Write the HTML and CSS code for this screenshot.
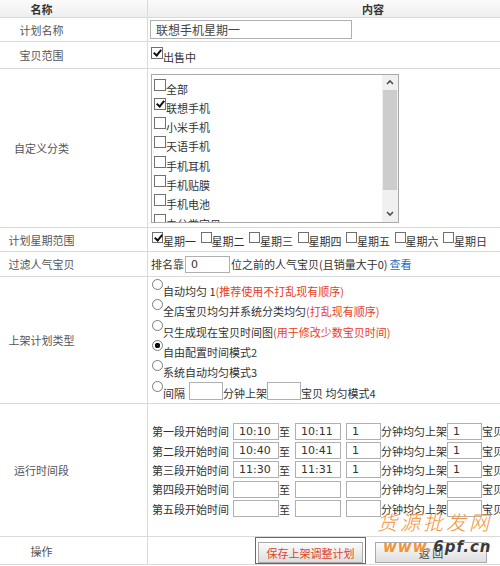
FILE: index.html
```html
<!DOCTYPE html>
<html>
<head>
    <meta charset="UTF-8">
    <title>上架计划</title>
    <link rel="stylesheet" href="styles.css">
</head>
<body>
<div class="page">
    <table class="plan">
        <colgroup><col class="c-label"><col class="c-body"></colgroup>
        <tr class="row-head">
            <th>名称</th>
            <th>内容</th>
        </tr>
        <tr class="row-name">
            <td class="label">计划名称</td>
            <td class="body"><input type="text" class="txt plan-name" value="联想手机星期一"></td>
        </tr>
        <tr class="row-scope">
            <td class="label">宝贝范围</td>
            <td class="body"><label class="opt"><input type="checkbox" class="cb" checked><span>出售中</span></label></td>
        </tr>
        <tr class="row-cat">
            <td class="label">自定义分类</td>
            <td class="body">
                <div class="listbox">
                    <div class="list-items">
                        <label class="opt"><input type="checkbox" class="cb"><span>全部</span></label>
                        <label class="opt"><input type="checkbox" class="cb" checked><span>联想手机</span></label>
                        <label class="opt"><input type="checkbox" class="cb"><span>小米手机</span></label>
                        <label class="opt"><input type="checkbox" class="cb"><span>天语手机</span></label>
                        <label class="opt"><input type="checkbox" class="cb"><span>手机耳机</span></label>
                        <label class="opt"><input type="checkbox" class="cb"><span>手机贴膜</span></label>
                        <label class="opt"><input type="checkbox" class="cb"><span>手机电池</span></label>
                        <label class="opt"><input type="checkbox" class="cb"><span>未分类宝贝</span></label>
                    </div>
                    <div class="scroll">
                        <div class="arrow">
                            <svg width="8" height="6" viewBox="0 0 8 6"><polyline points="1,5 4,2 7,5" fill="none" stroke="#505050" stroke-width="1.6"/></svg>
                        </div>
                        <div class="thumb"></div>
                        <div class="track"></div>
                        <div class="arrow">
                            <svg width="8" height="6" viewBox="0 0 8 6"><polyline points="1,1 4,4 7,1" fill="none" stroke="#505050" stroke-width="1.6"/></svg>
                        </div>
                    </div>
                </div>
            </td>
        </tr>
        <tr class="row-week">
            <td class="label">计划星期范围</td>
            <td class="body">
                <div class="week">
                    <label class="opt"><input type="checkbox" class="cb" checked><span>星期一</span></label>
                    <label class="opt"><input type="checkbox" class="cb"><span>星期二</span></label>
                    <label class="opt"><input type="checkbox" class="cb"><span>星期三</span></label>
                    <label class="opt"><input type="checkbox" class="cb"><span>星期四</span></label>
                    <label class="opt"><input type="checkbox" class="cb"><span>星期五</span></label>
                    <label class="opt"><input type="checkbox" class="cb"><span>星期六</span></label>
                    <label class="opt"><input type="checkbox" class="cb"><span>星期日</span></label>
                </div>
            </td>
        </tr>
        <tr class="row-filter">
            <td class="label">过滤人气宝贝</td>
            <td class="body">
                <div class="inline">
                    <span>排名靠</span><input type="text" class="txt rank" value="0"><span>位之前的人气宝贝(且销量大于0)</span><a class="link" href="#">查看</a>
                </div>
            </td>
        </tr>
        <tr class="row-type">
            <td class="label">上架计划类型</td>
            <td class="body">
                <div class="types">
                    <label class="opt"><input type="radio" name="mode" class="rd"><span>自动均匀 1<em class="hint">(推荐使用不打乱现有顺序)</em></span></label>
                    <label class="opt"><input type="radio" name="mode" class="rd"><span>全店宝贝均匀并系统分类均匀<em class="hint">(打乱现有顺序)</em></span></label>
                    <label class="opt"><input type="radio" name="mode" class="rd"><span>只生成现在宝贝时间图<em class="hint">(用于修改少数宝贝时间)</em></span></label>
                    <label class="opt"><input type="radio" name="mode" class="rd" checked><span>自由配置时间模式2</span></label>
                    <label class="opt"><input type="radio" name="mode" class="rd"><span>系统自动均匀模式3</span></label>
                    <label class="opt last"><input type="radio" name="mode" class="rd"><span>间隔</span><input type="text" class="txt gap gap-first"><span>分钟上架</span><input type="text" class="txt gap"><span>宝贝 均匀模式4</span></label>
                </div>
            </td>
        </tr>
        <tr class="row-time">
            <td class="label">运行时间段</td>
            <td class="body">
                <div class="slots">
                    <div class="slot">
                        <span class="slot-name">第一段开始时间</span><input class="txt t" value="10:10"><span class="to">至</span><input class="txt t" value="10:11"><input class="txt n" value="1"><span>分钟均匀上架</span><input class="txt n" value="1"><span>宝贝</span>
                    </div>
                    <div class="slot">
                        <span class="slot-name">第二段开始时间</span><input class="txt t" value="10:40"><span class="to">至</span><input class="txt t" value="10:41"><input class="txt n" value="1"><span>分钟均匀上架</span><input class="txt n" value="1"><span>宝贝</span>
                    </div>
                    <div class="slot">
                        <span class="slot-name">第三段开始时间</span><input class="txt t" value="11:30"><span class="to">至</span><input class="txt t" value="11:31"><input class="txt n" value="1"><span>分钟均匀上架</span><input class="txt n" value="1"><span>宝贝</span>
                    </div>
                    <div class="slot">
                        <span class="slot-name">第四段开始时间</span><input class="txt t" value=""><span class="to">至</span><input class="txt t" value=""><input class="txt n" value=""><span>分钟均匀上架</span><input class="txt n" value=""><span>宝贝</span>
                    </div>
                    <div class="slot">
                        <span class="slot-name">第五段开始时间</span><input class="txt t" value=""><span class="to">至</span><input class="txt t" value=""><input class="txt n" value=""><span>分钟均匀上架</span><input class="txt n" value=""><span>宝贝</span>
                    </div>
                </div>
            </td>
        </tr>
        <tr class="row-ops">
            <td class="label">操作</td>
            <td class="body ops">
                <div class="actions">
                    <span class="hl"><button class="btn btn-save">保存上架调整计划</button></span>
                    <button class="btn btn-back">返 回</button>
                </div>
            </td>
        </tr>
    </table>

    <div class="watermark">
        <div class="wm-name">货源批发网</div>
        <div class="wm-url">www.<b>6pf.cn</b></div>
    </div>
</div>
</body>
</html>
```

FILE: styles.css
```css
body {
    margin: 0;
    background: #fff;
    font-family: "Noto Sans CJK SC", sans-serif;
    font-size: 11px;
    color: #333;
}
.page {
    position: relative;
    width: 500px;
    height: 566px;
    overflow: hidden;
}
.plan {
    width: 664px;
    margin-left: -65px;
    border-collapse: collapse;
    table-layout: fixed;
}
.c-label {
    width: 212px;
}
.plan th, .plan td {
    border: 1px solid #dadada;
    padding: 0;
}
.row-head th {
    border-top: none;
    height: 17px;
    background: linear-gradient(#fbfbfb, #eeeeee);
    font-weight: bold;
    font-size: 11px;
    line-height: 14px;
    color: #333;
    text-align: center;
}
.row-name td { height: 23px; }
.row-scope td { height: 26px; }
.row-cat td { height: 158px; }
.row-week td { height: 23px; }
.row-filter td { height: 24px; }
.row-type td { height: 126px; }
.row-time td { height: 132px; }
.row-ops td { height: 25px; }
.label {
    text-align: center;
    vertical-align: middle;
    color: #555;
}
.body {
    vertical-align: middle;
    padding-left: 3px !important;
}
.txt {
    box-sizing: border-box;
    height: 17px;
    margin: 0;
    padding: 0 5px;
    border: 1px solid #b0b0b0;
    background: #fff;
    font-family: "DejaVu Sans", "Noto Sans CJK SC", sans-serif;
    font-size: 11px;
    color: #333;
    outline: none;
}
.plan-name {
    width: 202px;
    height: 19px;
    margin-left: -1px;
    font-family: "Noto Sans CJK SC", sans-serif;
    font-size: 12px;
    color: #444;
}
.opt {
    display: inline-flex;
    align-items: flex-start;
    line-height: 13px;
}
.opt > span {
    padding-top: 4px;
}
.cb {
    appearance: none;
    -webkit-appearance: none;
    position: relative;
    box-sizing: border-box;
    width: 12px;
    height: 12px;
    margin: 0;
    border: 1px solid #707070;
    background: #fff;
}
.cb:checked::after {
    content: "";
    position: absolute;
    left: 3px;
    top: 0;
    width: 3px;
    height: 6px;
    border: solid #111;
    border-width: 0 2px 2px 0;
    transform: rotate(40deg);
}
.rd {
    appearance: none;
    -webkit-appearance: none;
    box-sizing: border-box;
    width: 11px;
    height: 11px;
    margin: 0;
    border: 1px solid #7a7a7a;
    border-radius: 50%;
    background: #fff;
}
.rd:checked {
    background: radial-gradient(circle, #111 2.5px, #fff 3px);
}
.listbox {
    display: flex;
    width: 248px;
    height: 149px;
    box-sizing: border-box;
    border: 1px solid #a8a8a8;
}
.list-items {
    flex: 1;
    overflow: hidden;
    padding: 4px 0 0 2px;
}
.list-items .opt {
    display: flex;
    height: 19.3px;
}
.scroll {
    width: 16px;
    display: flex;
    flex-direction: column;
    background: #f0f0f0;
}
.arrow {
    height: 15px;
    display: flex;
    align-items: center;
    justify-content: center;
}
.thumb {
    height: 100px;
    margin: 0 1px;
    background: #cdcdcd;
}
.track {
    flex: 1;
}
.week {
    display: flex;
    margin-left: 1px;
}
.week .opt {
    margin-right: 4.5px;
}
.week .cb {
    width: 11px;
    height: 11px;
}
.week .opt > span {
    padding-top: 3px;
}
.inline {
    display: flex;
    align-items: center;
}
.rank {
    width: 45px;
    margin: 0 1px 0 1px;
}
.link {
    color: #1b6fc2;
    text-decoration: none;
    margin-left: 2px;
}
.types {
    display: flex;
    flex-direction: column;
    margin-left: 1px;
}
.types .opt {
    display: flex;
    height: 20.3px;
}
.types .opt > span {
    padding-top: 6px;
}
.hint {
    font-style: normal;
    color: #e8401e;
}
.gap {
    width: 34px;
    height: 18px;
    margin-top: 1px;
}
.gap-first {
    margin-left: 4px;
}
.slots {
    display: flex;
    flex-direction: column;
    margin-left: 1px;
}
.slot {
    display: flex;
    align-items: center;
    height: 19.3px;
    white-space: nowrap;
}
.slot-name {
    width: 81px;
}
.slot .t {
    width: 46px;
}
.to {
    width: 16px;
}
.slot .n {
    width: 35px;
}
.slot .to + .t {
    margin-right: 5px;
}
.ops {
    vertical-align: bottom !important;
}
.actions {
    display: flex;
    align-items: flex-end;
    padding-left: 104px;
}
.hl {
    display: inline-block;
    border: 1px solid #d33b3b;
    padding: 4px 2px 0;
}
.btn {
    display: block;
    height: 21px;
    padding: 0;
    border: 1px solid #a9a9a9;
    background: linear-gradient(#fbfbfb, #dedede);
    font-family: "Noto Sans CJK SC", sans-serif;
    font-size: 11px;
}
.btn-save {
    width: 105px;
    color: #e0421f;
}
.btn-back {
    width: 112px;
    margin-left: 9px;
    margin-bottom: 1px;
    color: #444;
}
.watermark {
    position: absolute;
    left: 377px;
    top: 508px;
    width: 123px;
    color: #f39236;
    font-style: italic;
    pointer-events: none;
}
.wm-name {
    font-size: 20px;
    font-weight: 300;
    line-height: 28px;
    letter-spacing: 3px;
}
.wm-url {
    font-family: "DejaVu Sans", sans-serif;
    font-size: 15px;
    font-weight: bold;
    line-height: 22px;
    margin-left: 6px;
    letter-spacing: 1px;
}
.wm-url b {
    color: #3a3a3a;
    text-shadow: 0 0 2px #fff;
}
```
